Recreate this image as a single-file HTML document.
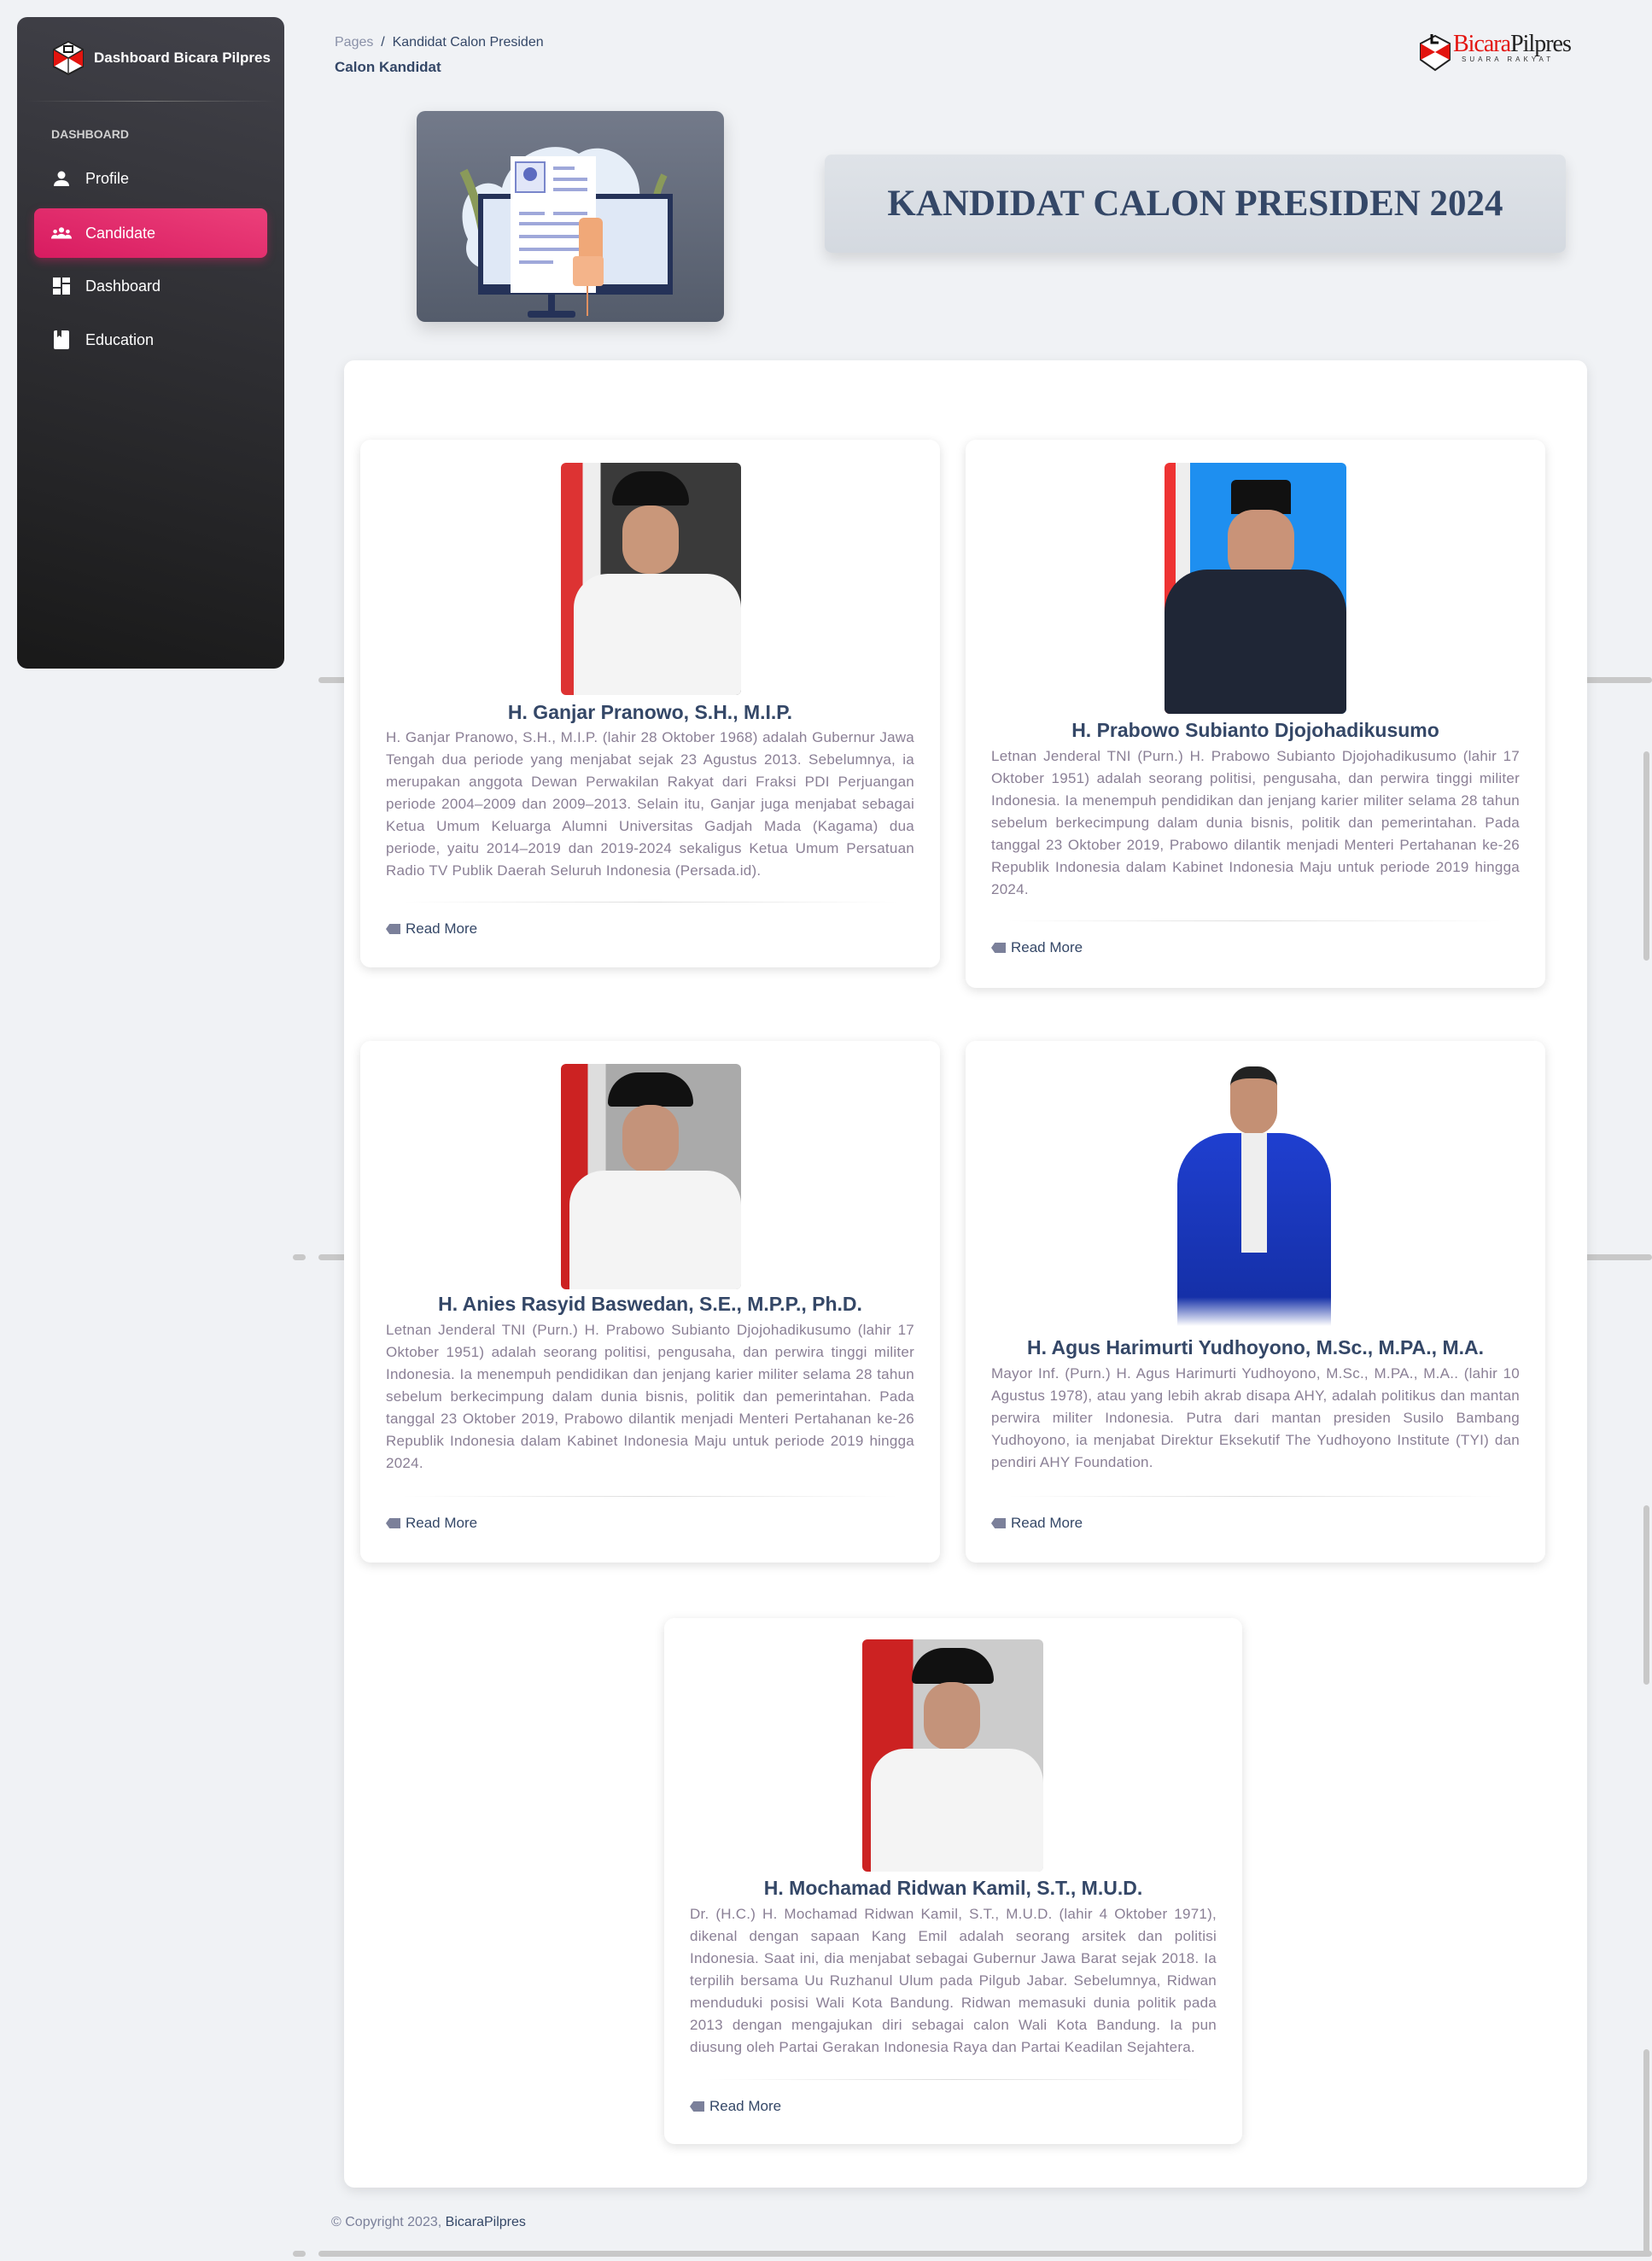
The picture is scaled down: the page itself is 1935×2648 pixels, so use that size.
<!DOCTYPE html>
<html><head><meta charset="utf-8">
<style>
*{box-sizing:border-box;margin:0;padding:0}
body{width:1935px;height:2648px;background:#f0f2f5;font-family:"Liberation Sans",sans-serif;position:relative;overflow:hidden}
.abs{position:absolute}
.side{left:20px;top:20px;width:313px;height:763px;border-radius:12px;background:linear-gradient(195deg,#42424a,#191919);}
.side .brand{left:42px;top:28px;display:flex;align-items:center;color:#fff;font-weight:bold;font-size:17px}
.side .hr{left:10px;right:10px;top:98px;height:1px;background:linear-gradient(90deg,transparent,#777,transparent)}
.side .lab{left:40px;top:129px;color:#d0d0d0;font-size:14px;font-weight:bold}
.item{left:20px;width:273px;height:58px;display:flex;align-items:center;padding-left:20px;color:#fff;font-size:18px}
.item .ic{width:24px;height:24px;margin-right:16px;display:flex;align-items:center;justify-content:center}
.item.act{background:linear-gradient(195deg,#ec407a,#d81b60);border-radius:8px;box-shadow:0 4px 10px rgba(233,30,99,.35)}
.card{background:#fff;border-radius:12px;box-shadow:0 4px 14px rgba(0,0,0,.1)}
.cand{position:absolute;background:#fff;border-radius:12px;box-shadow:0 3px 12px rgba(0,0,0,.13);}
.cand h3{position:absolute;left:0;right:0;text-align:center;color:#344767;font-size:23px;font-weight:bold}
.cand p{position:absolute;left:30px;right:30px;text-align:justify;color:#8a7f95;font-size:17px;letter-spacing:0.25px;line-height:26px;font-weight:300}
.cand .sep{position:absolute;left:50px;right:50px;height:1px;background:linear-gradient(90deg,transparent,#ddd,transparent)}
.cand .rm{position:absolute;left:30px;color:#344767;font-size:17px;display:flex;align-items:center}
.rm i{display:inline-block;width:17px;height:12px;background:#7b809a;margin-right:6px;clip-path:polygon(25% 0,100% 0,100% 100%,25% 100%,0 50%)}
.photo{position:absolute;border-radius:6px;overflow:hidden}
.gl{position:absolute;height:7px;background:#c8c8c8;border-radius:4px}
</style></head><body>

<div class="abs side">
  <div class="abs brand">
    <svg width="36" height="40" viewBox="0 0 36 40"><polygon points="18,1 35,10 35,30 18,39 1,30 1,10" fill="#fff" stroke="#222" stroke-width="2"/><polygon points="1,10 18,20 1,30" fill="#e3140f"/><polygon points="35,10 18,20 35,30" fill="#e3140f"/><polygon points="18,1 35,10 18,20 1,10" fill="#fff" stroke="#222" stroke-width="1.5"/><rect x="13" y="6" width="10" height="7" fill="none" stroke="#111" stroke-width="2"/><line x1="18" y1="20" x2="18" y2="39" stroke="#333" stroke-width="1.5"/></svg>
    <span style="margin-left:12px">Dashboard Bicara Pilpres</span>
  </div>
  <div class="abs hr"></div>
  <div class="abs lab">DASHBOARD</div>
  <div class="abs item" style="top:160px"><span class="ic"><svg width="20" height="20" viewBox="0 0 20 20"><circle cx="10" cy="6" r="4.5" fill="#fff"/><path d="M1 19c0-5 4-7 9-7s9 2 9 7z" fill="#fff"/></svg></span>Profile</div>
  <div class="abs item act" style="top:224px"><span class="ic"><svg width="26" height="16" viewBox="0 0 26 16"><circle cx="13" cy="4" r="3.3" fill="#fff"/><circle cx="5" cy="6" r="2.5" fill="#fff"/><circle cx="21" cy="6" r="2.5" fill="#fff"/><path d="M7 15c0-4 3-6 6-6s6 2 6 6z M0 15c0-3 2-5 5-5s4 2 4 5z M17 15c0-3 1-5 4-5s5 2 5 5z" fill="#fff"/></svg></span>Candidate</div>
  <div class="abs item" style="top:286px"><span class="ic"><svg width="20" height="20" viewBox="0 0 20 20"><rect x="0" y="0" width="9" height="11" fill="#fff"/><rect x="11" y="0" width="9" height="6" fill="#fff"/><rect x="0" y="13" width="9" height="7" fill="#fff"/><rect x="11" y="8" width="9" height="12" fill="#fff"/></svg></span>Dashboard</div>
  <div class="abs item" style="top:349px"><span class="ic"><svg width="18" height="22" viewBox="0 0 18 22"><rect x="0" y="0" width="18" height="22" rx="2" fill="#fff"/><path d="M4 0h5v8l-2.5-2L4 8z" fill="#333"/></svg></span>Education</div>
</div>

<div class="abs" style="left:392px;top:41px;font-size:16px;color:#344767"><span style="color:#8a91a8">Pages</span>&nbsp;&nbsp;/&nbsp;&nbsp;Kandidat Calon Presiden</div>
<div class="abs" style="left:392px;top:69px;font-size:17px;font-weight:bold;color:#344767">Calon Kandidat</div>

<div class="abs" style="left:1663px;top:38px;display:flex;align-items:flex-start">
  <svg width="36" height="46" viewBox="0 0 36 46"><polygon points="18,4 35,13 35,32 18,44 1,32 1,13" fill="#fff" stroke="#222" stroke-width="2"/><polygon points="1,13 18,23 1,32" fill="#e3140f"/><polygon points="35,13 18,23 35,32" fill="#e3140f"/><path d="M14 2v10h8" fill="none" stroke="#111" stroke-width="3"/></svg>
  <div style="margin-left:3px;line-height:1"><div style="font-family:'Liberation Serif',serif;font-size:28px;letter-spacing:-1px"><span style="color:#e3140f">Bicara</span><span style="color:#222">Pilpres</span></div><div style="font-size:8px;letter-spacing:4px;color:#333;margin-left:10px">SUARA RAKYAT</div></div>
</div>

<div class="abs" style="left:488px;top:130px;width:360px;height:247px;border-radius:10px;background:linear-gradient(180deg,#737a8a,#545c6b);box-shadow:0 8px 20px rgba(0,0,0,.15)">
  <svg width="360" height="247" viewBox="0 0 360 247">
    <path d="M60 150c-20-40 10-80 40-60c10-40 60-60 90-40c30-20 80 10 70 60c20 30 0 80-40 80c-20 30-90 20-110 0c-30 0-60-10-50-40z" fill="#e6eef8"/>
    <path d="M55 70c20 40 25 90 30 110" stroke="#8a9a5a" stroke-width="10" fill="none"/>
    <path d="M290 75c-15 30-15 60-10 90" stroke="#8a9a5a" stroke-width="8" fill="none"/>
    <rect x="72" y="97" width="228" height="118" fill="#253258"/>
    <rect x="78" y="103" width="216" height="100" fill="#dfe8f6"/>
    <rect x="154" y="215" width="8" height="22" fill="#253258"/>
    <rect x="130" y="234" width="56" height="8" rx="3" fill="#253258"/>
    <rect x="110" y="53" width="100" height="160" fill="#fff"/>
    <rect x="116" y="60" width="34" height="35" fill="#e1e6f8" stroke="#7986cb" stroke-width="2"/>
    <circle cx="133" cy="74" r="8" fill="#5c6bc0"/>
    <g fill="#9fa8da"><rect x="160" y="65" width="25" height="4"/><rect x="160" y="78" width="40" height="4"/><rect x="160" y="90" width="40" height="4"/><rect x="120" y="118" width="30" height="4"/><rect x="160" y="118" width="40" height="4"/><rect x="120" y="130" width="80" height="4"/><rect x="120" y="145" width="80" height="4"/><rect x="120" y="160" width="80" height="4"/><rect x="120" y="175" width="40" height="4"/></g>
    <rect x="190" y="125" width="28" height="80" rx="6" fill="#f0a878"/>
    <rect x="183" y="170" width="36" height="35" rx="4" fill="#f4b48a"/>
    <line x1="200" y1="205" x2="200" y2="240" stroke="#e09060" stroke-width="2"/>
  </svg>
</div>

<div class="abs" style="left:966px;top:181px;width:868px;height:115px;border-radius:8px;background:linear-gradient(180deg,#dfe3e8,#d4d9e0);box-shadow:0 8px 16px rgba(0,0,0,.12);display:flex;align-items:center;justify-content:center;font-family:'Liberation Serif',serif;font-weight:bold;font-size:43px;color:#344767">KANDIDAT CALON PRESIDEN 2024</div>

<div class="gl" style="left:373px;width:50px;top:793px"></div>
<div class="gl" style="left:1101px;width:30px;top:793px"></div>
<div class="gl" style="left:1810px;width:125px;top:793px"></div>
<div class="gl" style="left:373px;width:50px;top:1469px"></div>
<div class="gl" style="left:343px;width:15px;top:1469px"></div>
<div class="gl" style="left:1101px;width:30px;top:1469px"></div>
<div class="gl" style="left:1810px;width:125px;top:1469px"></div>
<div class="gl" style="left:373px;width:1562px;top:2636px"></div>
<div class="gl" style="left:343px;width:15px;top:2636px"></div>
<div class="gl" style="left:1925px;width:7px;top:880px;height:245px"></div>
<div class="gl" style="left:1925px;width:7px;top:1763px;height:210px"></div>
<div class="gl" style="left:1925px;width:7px;top:2400px;height:240px"></div>

<div class="abs card" style="left:403px;top:422px;width:1456px;height:2140px"></div>

<div class="cand" style="left:422px;top:515px;width:679px;height:618px">
  <div class="photo" style="left:235px;top:27px;width:211px;height:272px;background:linear-gradient(90deg,#d33 0 12%,#eee 12% 22%,#3a3a3a 22%)">
    <div style="position:absolute;left:60px;top:10px;width:90px;height:40px;background:#111;border-radius:40px 40px 5px 5px"></div>
    <div style="position:absolute;left:72px;top:50px;width:66px;height:80px;background:#c9977a;border-radius:30px"></div>
    <div style="position:absolute;left:15px;top:130px;width:196px;height:142px;background:#f4f4f4;border-radius:40px 40px 0 0"></div>
  </div>
  <h3 style="top:306px">H. Ganjar Pranowo, S.H., M.I.P.</h3>
  <p style="top:336px">H. Ganjar Pranowo, S.H., M.I.P. (lahir 28 Oktober 1968) adalah Gubernur Jawa Tengah dua periode yang menjabat sejak 23 Agustus 2013. Sebelumnya, ia merupakan anggota Dewan Perwakilan Rakyat dari Fraksi PDI Perjuangan periode 2004–2009 dan 2009–2013. Selain itu, Ganjar juga menjabat sebagai Ketua Umum Keluarga Alumni Universitas Gadjah Mada (Kagama) dua periode, yaitu 2014–2019 dan 2019-2024 sekaligus Ketua Umum Persatuan Radio TV Publik Daerah Seluruh Indonesia (Persada.id).</p>
  <div class="sep" style="top:541px"></div>
  <div class="rm" style="top:563px"><i></i>Read More</div>
</div>

<div class="cand" style="left:1131px;top:515px;width:679px;height:642px">
  <div class="photo" style="left:233px;top:27px;width:213px;height:294px;background:linear-gradient(90deg,#e33 0 6%,#eee 6% 14%,#1e8ff0 14%)">
    <div style="position:absolute;left:78px;top:20px;width:70px;height:40px;background:#111;border-radius:6px 6px 0 0"></div>
    <div style="position:absolute;left:74px;top:55px;width:78px;height:85px;background:#c99378;border-radius:30px"></div>
    <div style="position:absolute;left:0;top:125px;width:213px;height:169px;background:#1f2636;border-radius:50px 50px 0 0"></div>
  </div>
  <h3 style="top:327px">H. Prabowo Subianto Djojohadikusumo</h3>
  <p style="top:358px">Letnan Jenderal TNI (Purn.) H. Prabowo Subianto Djojohadikusumo (lahir 17 Oktober 1951) adalah seorang politisi, pengusaha, dan perwira tinggi militer Indonesia. Ia menempuh pendidikan dan jenjang karier militer selama 28 tahun sebelum berkecimpung dalam dunia bisnis, politik dan pemerintahan. Pada tanggal 23 Oktober 2019, Prabowo dilantik menjadi Menteri Pertahanan ke-26 Republik Indonesia dalam Kabinet Indonesia Maju untuk periode 2019 hingga 2024.</p>
  <div class="sep" style="top:563px"></div>
  <div class="rm" style="top:585px"><i></i>Read More</div>
</div>

<div class="cand" style="left:422px;top:1219px;width:679px;height:611px">
  <div class="photo" style="left:235px;top:27px;width:211px;height:264px;background:linear-gradient(90deg,#c22 0 15%,#ddd 15% 25%,#aaa 25%)">
    <div style="position:absolute;left:55px;top:10px;width:100px;height:40px;background:#111;border-radius:40px 40px 5px 5px"></div>
    <div style="position:absolute;left:72px;top:48px;width:66px;height:80px;background:#c4937a;border-radius:30px"></div>
    <div style="position:absolute;left:10px;top:125px;width:201px;height:139px;background:#f4f4f4;border-radius:40px 40px 0 0"></div>
  </div>
  <h3 style="top:295px">H. Anies Rasyid Baswedan, S.E., M.P.P., Ph.D.</h3>
  <p style="top:326px">Letnan Jenderal TNI (Purn.) H. Prabowo Subianto Djojohadikusumo (lahir 17 Oktober 1951) adalah seorang politisi, pengusaha, dan perwira tinggi militer Indonesia. Ia menempuh pendidikan dan jenjang karier militer selama 28 tahun sebelum berkecimpung dalam dunia bisnis, politik dan pemerintahan. Pada tanggal 23 Oktober 2019, Prabowo dilantik menjadi Menteri Pertahanan ke-26 Republik Indonesia dalam Kabinet Indonesia Maju untuk periode 2019 hingga 2024.</p>
  <div class="sep" style="top:533px"></div>
  <div class="rm" style="top:555px"><i></i>Read More</div>
</div>

<div class="cand" style="left:1131px;top:1219px;width:679px;height:611px">
  <div class="photo" style="left:228px;top:30px;width:220px;height:304px;background:#fff">
    <div style="position:absolute;left:82px;top:0;width:55px;height:80px;background:#c49074;border-radius:25px 25px 30px 30px;border-top:14px solid #222"></div>
    <div style="position:absolute;left:20px;top:78px;width:180px;height:226px;background:linear-gradient(180deg,#1f3fd0,#1530a8 85%,#fff);border-radius:60px 60px 0 0"></div>
    <div style="position:absolute;left:95px;top:78px;width:30px;height:140px;background:#eee"></div>
  </div>
  <h3 style="top:346px">H. Agus Harimurti Yudhoyono, M.Sc., M.PA., M.A.</h3>
  <p style="top:377px">Mayor Inf. (Purn.) H. Agus Harimurti Yudhoyono, M.Sc., M.PA., M.A.. (lahir 10 Agustus 1978), atau yang lebih akrab disapa AHY, adalah politikus dan mantan perwira militer Indonesia. Putra dari mantan presiden Susilo Bambang Yudhoyono, ia menjabat Direktur Eksekutif The Yudhoyono Institute (TYI) dan pendiri AHY Foundation.</p>
  <div class="sep" style="top:533px"></div>
  <div class="rm" style="top:555px"><i></i>Read More</div>
</div>

<div class="cand" style="left:778px;top:1895px;width:677px;height:616px">
  <div class="photo" style="left:232px;top:25px;width:212px;height:272px;background:linear-gradient(90deg,#c22 0 28%,#ccc 28%)">
    <div style="position:absolute;left:58px;top:10px;width:96px;height:42px;background:#111;border-radius:40px 40px 5px 5px"></div>
    <div style="position:absolute;left:72px;top:50px;width:66px;height:80px;background:#c4937a;border-radius:30px"></div>
    <div style="position:absolute;left:10px;top:128px;width:202px;height:144px;background:#f4f4f4;border-radius:40px 40px 0 0"></div>
  </div>
  <h3 style="top:303px">H. Mochamad Ridwan Kamil, S.T., M.U.D.</h3>
  <p style="top:334px">Dr. (H.C.) H. Mochamad Ridwan Kamil, S.T., M.U.D. (lahir 4 Oktober 1971), dikenal dengan sapaan Kang Emil adalah seorang arsitek dan politisi Indonesia. Saat ini, dia menjabat sebagai Gubernur Jawa Barat sejak 2018. Ia terpilih bersama Uu Ruzhanul Ulum pada Pilgub Jabar. Sebelumnya, Ridwan menduduki posisi Wali Kota Bandung. Ridwan memasuki dunia politik pada 2013 dengan mengajukan diri sebagai calon Wali Kota Bandung. Ia pun diusung oleh Partai Gerakan Indonesia Raya dan Partai Keadilan Sejahtera.</p>
  <div class="sep" style="top:540px"></div>
  <div class="rm" style="top:562px"><i></i>Read More</div>
</div>

<div class="abs" style="left:388px;top:2594px;font-size:16px;color:#7b809a">© Copyright 2023, <span style="color:#344767">BicaraPilpres</span></div>
</body></html>
